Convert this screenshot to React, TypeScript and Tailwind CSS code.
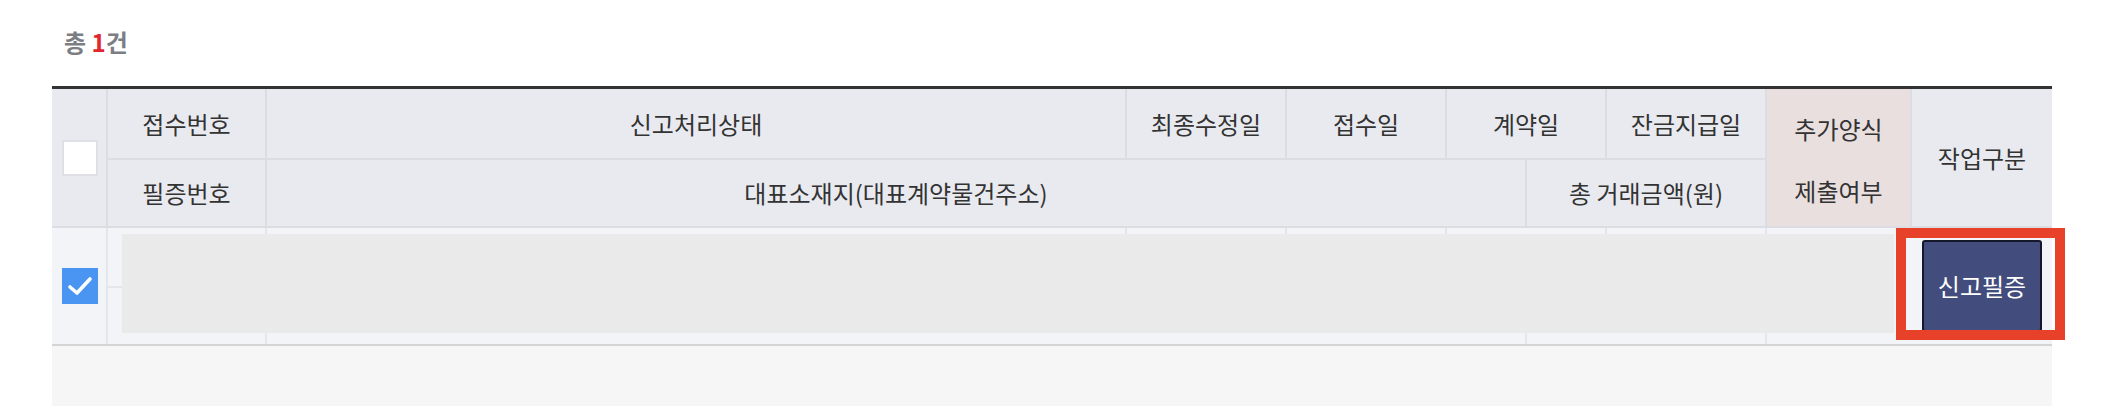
import React from "react";

const FONT = { fontFamily: '"Noto Sans CJK KR", "Noto Sans", sans-serif' };

function Cell({ w, children, className = "" }: { w: string; children?: React.ReactNode; className?: string }) {
  return (
    <div className={`${w} flex shrink-0 items-center justify-center border-r-2 ${className}`}>
      {children}
    </div>
  );
}

export default function App() {
  return (
    <div className="h-[406px] w-[2102px] bg-white text-[24px] text-[#333]" style={FONT}>
      <div className="flex h-[86px] items-center pl-[64px] pb-[2px] text-[24px] font-bold text-[#7b7e83]">
        <span>총&nbsp;</span>
        <span className="text-[#e1262d]">1</span>
        <span>건</span>
      </div>

      <div className="ml-[52px] w-[2000px] border-t-[3px] border-[#333]">
        {/* Header */}
        <div className="flex h-[139px] bg-[#e9eaf0] border-[#dcdde3]">
          <div className="flex w-[56px] shrink-0 items-center justify-center border-r-2 border-b-2 border-[#dcdde3] pl-[1px]">
            <div className="h-[36px] w-[36px] border-2 border-[#dfe0e6] bg-white" />
          </div>
          <div className="flex w-[1659px] shrink-0 flex-col">
            <div className="flex h-[71px] border-b-2 border-[#dcdde3]">
              <Cell w="w-[159px]" className="border-[#dcdde3]">접수번호</Cell>
              <Cell w="w-[860px]" className="border-[#dcdde3]">신고처리상태</Cell>
              <Cell w="w-[160px]" className="border-[#dcdde3]">최종수정일</Cell>
              <Cell w="w-[160px]" className="border-[#dcdde3]">접수일</Cell>
              <Cell w="w-[160px]" className="border-[#dcdde3]">계약일</Cell>
              <Cell w="w-[160px]" className="border-[#dcdde3]">잔금지급일</Cell>
            </div>
            <div className="flex h-[68px] border-b-2 border-[#dcdde3]">
              <Cell w="w-[159px]" className="border-[#dcdde3]">필증번호</Cell>
              <Cell w="w-[1260px]" className="border-[#dcdde3]">대표소재지(대표계약물건주소)</Cell>
              <Cell w="w-[240px]" className="border-[#dcdde3]">총 거래금액(원)</Cell>
            </div>
          </div>
          <div className="flex w-[145px] shrink-0 flex-col items-center justify-center border-r-2 border-b-2 border-[#dcdde3] bg-[#e9dfdf] leading-[62px] pt-[4px]">
            <span>추가양식</span>
            <span>제출여부</span>
          </div>
          <div className="flex w-[140px] shrink-0 items-center justify-center border-b-2 border-[#dcdde3]">
            작업구분
          </div>
        </div>

        {/* Body */}
        <div className="relative flex h-[118px] border-b-2 border-[#d4d4d6] bg-[#f3f4f8]">
          <div className="flex w-[56px] shrink-0 items-center justify-center border-r-2 border-[#e5e6eb] pl-[1px]">
            <div className="flex h-[36px] w-[36px] items-center justify-center bg-[#4a94f2]">
              <svg width="28" height="24" viewBox="0 0 28 24" fill="none">
                <path d="M4 13 L11 19 L24 5" stroke="white" strokeWidth="3.6" strokeLinecap="round" strokeLinejoin="round" />
              </svg>
            </div>
          </div>
          <div className="flex w-[1659px] shrink-0 flex-col">
            <div className="flex h-[60px] border-b-2 border-[#e5e6eb]">
              <Cell w="w-[159px]" className="border-[#e5e6eb]" />
              <Cell w="w-[860px]" className="border-[#e5e6eb]" />
              <Cell w="w-[160px]" className="border-[#e5e6eb]" />
              <Cell w="w-[160px]" className="border-[#e5e6eb]" />
              <Cell w="w-[160px]" className="border-[#e5e6eb]" />
              <Cell w="w-[160px]" className="border-[#e5e6eb]" />
            </div>
            <div className="flex h-[56px]">
              <Cell w="w-[159px]" className="border-[#e5e6eb]" />
              <Cell w="w-[1260px]" className="border-[#e5e6eb]" />
              <Cell w="w-[240px]" className="border-[#e5e6eb]" />
            </div>
          </div>
          <div className="w-[145px] shrink-0" />
          <div className="flex w-[140px] shrink-0 items-center justify-center">
            <button className="h-[92px] w-[120px] rounded-[3px] border-2 border-[#15172a] bg-[#434d7d] text-[24px] text-white" style={FONT}>
              신고필증
            </button>
          </div>

          {/* skeleton overlay */}
          <div className="absolute left-[70px] top-[6px] h-[99px] w-[1772px] bg-[#eaeaea]" />
          {/* annotation */}
          <div className="pointer-events-none absolute left-[1844px] top-0 h-[112px] w-[169px] border-[10px] border-[#e8412a]" />
        </div>

        {/* Footer area */}
        <div className="h-[60px] bg-[#f6f6f6]" />
      </div>
    </div>
  );
}
